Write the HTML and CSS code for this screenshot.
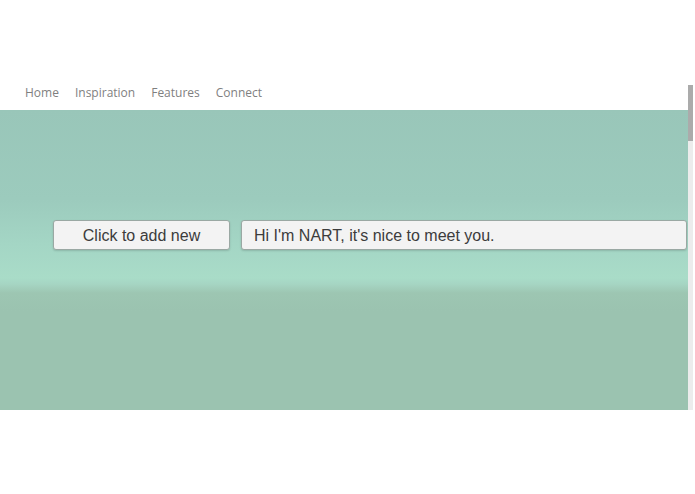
FILE: index.html
```html
<!DOCTYPE html>
<html lang="en">
<head>
    <meta charset="UTF-8">
    <meta name="viewport" content="width=device-width, initial-scale=1.0">
    <title>NART</title>
    <link rel="stylesheet" href="styles.css">
</head>
<body>
    <div class="frame">
        <div class="frame-content">
            <nav class="nav">
                <a href="#">Home</a>
                <a href="#">Inspiration</a>
                <a href="#">Features</a>
                <a href="#">Connect</a>
            </nav>
            <div class="stage">
                <div class="controls">
                    <button class="add-button">Click to add new</button>
                    <input class="chat-input" type="text" value="Hi I'm NART, it's nice to meet you.">
                </div>
            </div>
        </div>
        <div class="scrollbar">
            <div class="thumb"></div>
        </div>
    </div>
</body>
</html>
```

FILE: styles.css
```css
body {
    margin: 0;
    background-color: #ffffff;
    font-family: "Open Sans", sans-serif;
}

.frame {
    display: flex;
    margin-top: 85px;
    width: 695px;
}

.frame-content {
    width: 688px;
    display: flex;
    flex-direction: column;
}

.nav {
    height: 25px;
    display: flex;
    align-items: flex-start;
    gap: 16px;
    padding-left: 25px;
}

.nav a {
    color: #7f7f7f;
    text-decoration: none;
    font-size: 12px;
    line-height: 16px;
}

.stage {
    height: 300px;
    width: 689px;
    background: linear-gradient(
        to bottom,
        #99c6b9 0%,
        #9ccbbd 30%,
        #a4d6c5 45%,
        #a9dcc8 56%,
        #a6d5c3 58%,
        #9dc6b2 61%,
        #9bc3b0 67%,
        #9bc3b0 100%
    );
}

.controls {
    display: flex;
    gap: 11px;
    padding-top: 110px;
    padding-left: 53px;
}

.add-button,
.chat-input {
    height: 30px;
    box-sizing: border-box;
    background-color: #f3f3f3;
    border: 1px solid #9aa8a3;
    border-radius: 3px;
    font-family: "Liberation Sans", Arial, sans-serif;
    font-size: 16px;
    color: #3c3c3c;
    box-shadow: 0 1px 2px rgba(0, 0, 0, 0.15);
}

.add-button {
    width: 177px;
    padding: 2px 0 0;
}

.chat-input {
    width: 446px;
    padding: 2px 12px 0;
    outline: none;
}

.scrollbar {
    width: 5px;
    height: 325px;
    background-color: #ececec;
}

.thumb {
    height: 56px;
    background-color: #ababab;
}
```
